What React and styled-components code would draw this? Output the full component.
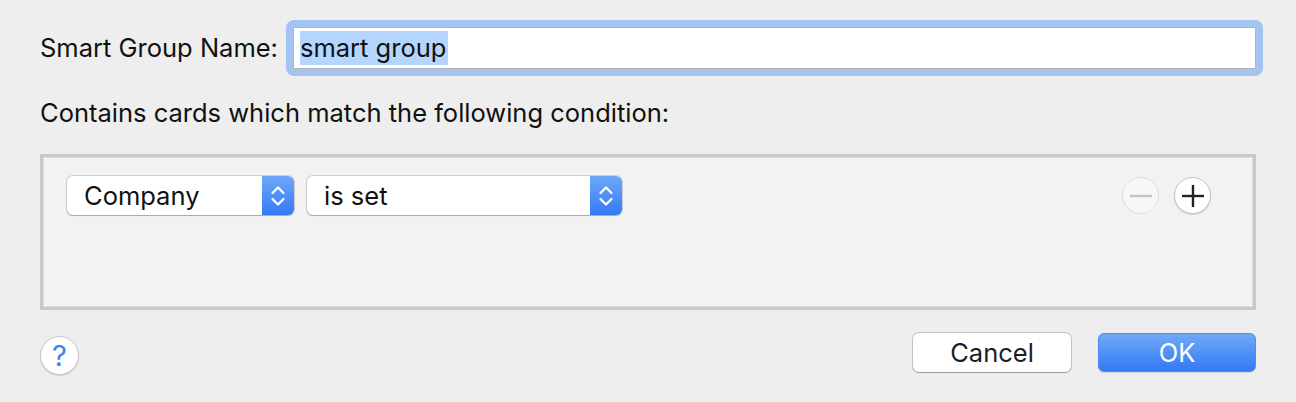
import React from "react";
import styled, { createGlobalStyle } from "styled-components";

const GlobalStyle = createGlobalStyle`
  html, body {
    margin: 0;
    padding: 0;
    background: #eeeeee;
  }
  body {
    font-family: Inter, "Liberation Sans", Arial, sans-serif;
    color: #111;
    -webkit-font-smoothing: antialiased;
  }
`;

const Dialog = styled.div`
  width: 1296px;
  height: 402px;
  box-sizing: border-box;
  padding: 27px 40px 0 40px;
  background: #eeeeee;
  font-size: 25.5px;
  overflow: hidden;
`;

const NameRow = styled.div`
  display: flex;
  align-items: center;
  height: 42px;
`;

const Label = styled.label`
  white-space: nowrap;
  margin-right: 8px;
  line-height: 32px;
`;

const FocusRing = styled.div`
  flex: 1;
  margin: -7px -7px -7px 0;
  padding: 7px;
  border-radius: 8px;
  background: #a3c3f1;
  display: flex;
`;

const Field = styled.div`
  flex: 1;
  height: 42px;
  box-sizing: border-box;
  background: #fff;
  border: 1px solid #b4b4b4;
  display: flex;
  align-items: center;
  padding-left: 6px;
`;

const Selected = styled.span`
  background: #b4d6fe;
  line-height: 34px;
  padding-right: 2px;
`;

const Caption = styled.div`
  margin-top: 28px;
  line-height: 32px;
`;

const ConditionBox = styled.div`
  margin-top: 25px;
  height: 156px;
  box-sizing: border-box;
  border: 3px solid #c9c9c9;
  box-shadow: inset 0 0 0 1px #dadada;
  background: #f2f2f2;
  padding: 19px 42px 0 24px;
`;

const ConditionRow = styled.div`
  display: flex;
  align-items: center;
  gap: 13px;
`;

const Popup = styled.div`
  width: ${({ width }) => width}px;
  height: 39px;
  box-sizing: border-box;
  display: flex;
  background: #fff;
  border-radius: 6px;
  box-shadow: 0 0 0 1px rgba(0, 0, 0, 0.14), 0 1px 1px rgba(0, 0, 0, 0.2);
  overflow: hidden;
`;

const PopupText = styled.span`
  flex: 1;
  display: flex;
  align-items: center;
  padding-left: 17px;
  line-height: 32px;
`;

const PopupArrow = styled.span`
  width: 32px;
  display: flex;
  align-items: center;
  justify-content: center;
  background: linear-gradient(#6fa8f8, #3479f6);
`;

const Spacer = styled.div`
  flex: 1;
`;

const RoundButtons = styled.div`
  display: flex;
  gap: 15px;
`;

const RoundButton = styled.button`
  width: 37px;
  height: 37px;
  padding: 0;
  border-radius: 50%;
  display: flex;
  align-items: center;
  justify-content: center;
  background: ${({ disabled }) => (disabled ? "#f7f7f7" : "#fff")};
  border: 1px solid ${({ disabled }) => (disabled ? "#dedede" : "#c4c4c4")};
  box-shadow: ${({ disabled }) =>
    disabled ? "none" : "0 1px 1px rgba(0, 0, 0, 0.15)"};
  box-sizing: border-box;
`;

const Footer = styled.div`
  margin-top: 23px;
  display: flex;
  align-items: flex-start;
`;

const HelpButton = styled.button`
  margin-top: 3px;
  width: 39px;
  height: 39px;
  padding: 0;
  border-radius: 50%;
  background: #fff;
  border: 1px solid #c6c6c6;
  box-shadow: 0 1px 1px rgba(0, 0, 0, 0.15);
  color: #3b82f6;
  font-family: Inter, "Liberation Sans", Arial, sans-serif;
  font-weight: 400;
  font-size: 29px;
  line-height: 37px;
  box-sizing: border-box;
`;

const ActionButtons = styled.div`
  margin-left: auto;
  display: flex;
  gap: 27px;
`;

const PushButton = styled.button`
  width: 158px;
  height: 39px;
  border-radius: 6px;
  font-family: Inter, "Liberation Sans", Arial, sans-serif;
  font-size: 25.5px;
  box-sizing: border-box;
  padding: 0;
  color: ${({ primary }) => (primary ? "#fff" : "#1d1d1d")};
  background: ${({ primary }) =>
    primary ? "linear-gradient(#70a9f8, #3479f6)" : "#fff"};
  border: ${({ primary }) => (primary ? "1px solid #4d8bf5" : "none")};
  box-shadow: ${({ primary }) =>
    primary
      ? "0 1px 1px rgba(0, 0, 0, 0.12)"
      : "0 0 0 1px rgba(0, 0, 0, 0.16), 0 1px 1px rgba(0, 0, 0, 0.22)"};
`;

const Chevrons = () => (
  <svg width="16" height="26" viewBox="0 0 16 26" fill="none">
    <path
      d="M2.5 10 L8 4.5 L13.5 10"
      stroke="#fff"
      strokeWidth="2.2"
      strokeLinecap="round"
      strokeLinejoin="round"
    />
    <path
      d="M2.5 16 L8 21.5 L13.5 16"
      stroke="#fff"
      strokeWidth="2.2"
      strokeLinecap="round"
      strokeLinejoin="round"
    />
  </svg>
);

const Sign = ({ plus, color }) => (
  <svg width="24" height="24" viewBox="0 0 24 24">
    <line x1="1" y1="12" x2="23" y2="12" stroke={color} strokeWidth="2.4" />
    {plus && (
      <line x1="12" y1="1" x2="12" y2="23" stroke={color} strokeWidth="2.4" />
    )}
  </svg>
);

const SelectPopup = ({ width, value }) => (
  <Popup width={width}>
    <PopupText>{value}</PopupText>
    <PopupArrow>
      <Chevrons />
    </PopupArrow>
  </Popup>
);

export default function App() {
  return (
    <>
      <GlobalStyle />
      <Dialog>
        <NameRow>
          <Label>Smart Group Name:</Label>
          <FocusRing>
            <Field>
              <Selected>smart group</Selected>
            </Field>
          </FocusRing>
        </NameRow>
        <Caption>Contains cards which match the following condition:</Caption>
        <ConditionBox>
          <ConditionRow>
            <SelectPopup width={227} value="Company" />
            <SelectPopup width={315} value="is set" />
            <Spacer />
            <RoundButtons>
              <RoundButton disabled>
                <Sign color="#c2c2c2" />
              </RoundButton>
              <RoundButton>
                <Sign plus color="#222" />
              </RoundButton>
            </RoundButtons>
          </ConditionRow>
        </ConditionBox>
        <Footer>
          <HelpButton>?</HelpButton>
          <ActionButtons>
            <PushButton>Cancel</PushButton>
            <PushButton primary>OK</PushButton>
          </ActionButtons>
        </Footer>
      </Dialog>
    </>
  );
}
